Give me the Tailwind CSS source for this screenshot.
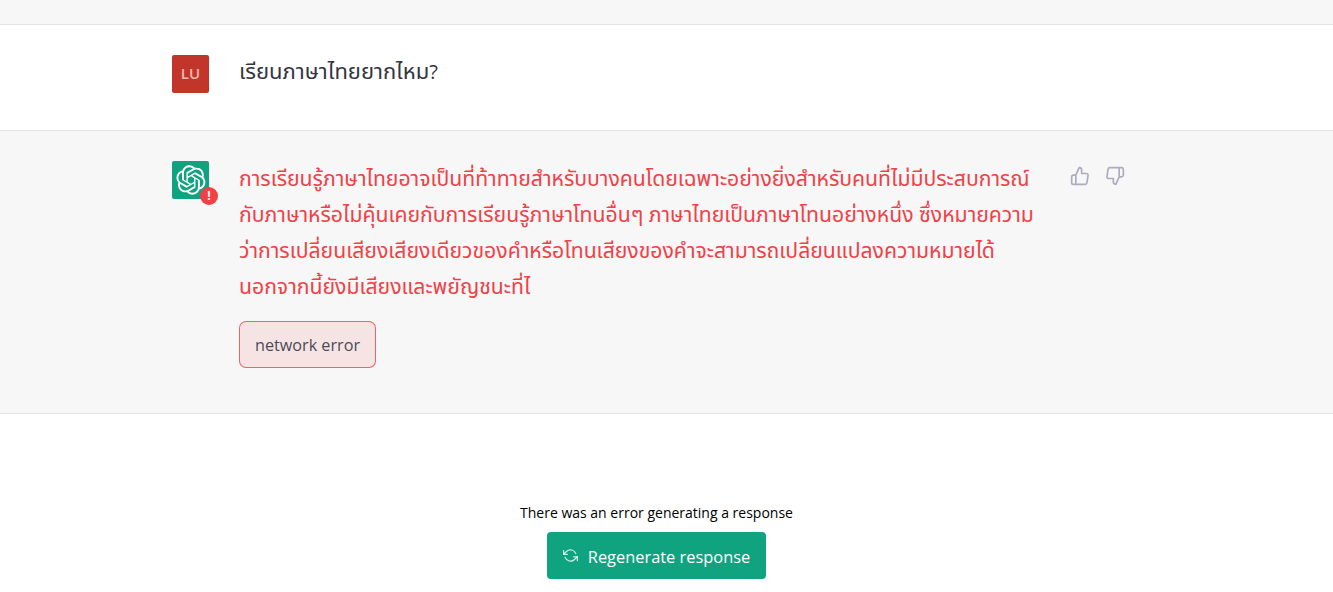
<!DOCTYPE html>
<html lang="th">
<head>
    <meta charset="UTF-8">
    <title>Chat</title>
    <script src="https://cdn.jsdelivr.net/npm/@tailwindcss/browser@4"></script>
</head>
<body class="bg-white font-['Open_Sans','Noto_Sans','Noto_Sans_Thai','DejaVu_Sans',sans-serif] text-[#343541] overflow-hidden h-[592px]">
    <!-- Previous message strip -->
    <div class="h-[25px] bg-[#f7f7f8] border-b border-[#e3e3e6]"></div>

    <!-- User message -->
    <div class="h-[106px] border-b border-[#e3e3e6] bg-white pl-[172px] pt-[30px] flex gap-[30px]">
        <div class="w-[37px] h-[38px] pb-[2px] rounded-[2px] bg-[#c2352a] text-[#f6b9b1] text-[15px] font-semibold flex items-center justify-center shrink-0">LU</div>
        <p class="text-[22px] leading-[30px]">เรียนภาษาไทยยากไหม<span class="text-[20px]">?</span></p>
    </div>

    <!-- Assistant message -->
    <div class="h-[283px] border-b border-[#e3e3e6] bg-[#f7f7f8] pl-[172px] pt-[30px] flex">
        <div class="relative w-[37px] h-[38px] rounded-[2px] bg-[#10a37f] flex items-center justify-center shrink-0">
            <svg class="w-[30px] h-[30px] text-white" viewBox="0 0 41 41" fill="currentColor"><path d="M37.5324 16.8707C37.9808 15.5241 38.1363 14.0974 37.9886 12.6859C37.8409 11.2744 37.3934 9.91076 36.676 8.68622C35.6126 6.83404 33.9882 5.3676 32.0373 4.4985C30.0864 3.62941 27.9098 3.40259 25.8215 3.85078C24.8796 2.7893 23.7219 1.94125 22.4257 1.36341C21.1295 0.785575 19.7249 0.491269 18.3058 0.500197C16.1708 0.495044 14.0893 1.16803 12.3614 2.42214C10.6335 3.67624 9.34853 5.44666 8.6917 7.47815C7.30085 7.76286 5.98686 8.3414 4.8377 9.17505C3.68854 10.0087 2.73073 11.0782 2.02839 12.312C0.956464 14.1591 0.498905 16.2988 0.721698 18.4228C0.944492 20.5467 1.83612 22.5449 3.268 24.1293C2.81966 25.4759 2.66413 26.9026 2.81182 28.3141C2.95951 29.7256 3.40701 31.0892 4.12437 32.3138C5.18791 34.1659 6.8123 35.6322 8.76321 36.5013C10.7141 37.3704 12.8907 37.5973 14.9789 37.1492C15.9208 38.2107 17.0786 39.0587 18.3747 39.6366C19.6709 40.2144 21.0755 40.5087 22.4946 40.4998C24.6307 40.5054 26.7133 39.8321 28.4418 38.5772C30.1704 37.3223 31.4556 35.5506 32.1119 33.5179C33.5027 33.2332 34.8167 32.6547 35.9659 31.821C37.115 30.9874 38.0728 29.9178 38.7752 28.684C39.8458 26.8371 40.3023 24.6979 40.0789 22.5748C39.8556 20.4517 38.9639 18.4544 37.5324 16.8707ZM22.4978 37.8849C20.7443 37.8874 19.0459 37.2733 17.6994 36.1501C17.7601 36.117 17.8666 36.0586 17.936 36.0161L25.9004 31.4156C26.1003 31.3019 26.2663 31.137 26.3813 30.9378C26.4964 30.7386 26.5563 30.5124 26.5549 30.2825V19.0542L29.9213 20.998C29.9389 21.0068 29.9541 21.0198 29.9656 21.0359C29.977 21.052 29.9842 21.0707 29.9867 21.0902V30.3889C29.9842 32.375 29.1946 34.2791 27.7909 35.6841C26.3872 37.0892 24.4838 37.8806 22.4978 37.8849ZM6.39227 31.0064C5.51397 29.4888 5.19742 27.7107 5.49804 25.9832C5.55718 26.0187 5.66048 26.0818 5.73461 26.1244L13.699 30.7248C13.8975 30.8408 14.1233 30.902 14.3532 30.902C14.583 30.902 14.8088 30.8408 15.0073 30.7248L24.731 25.1103V28.9979C24.7321 29.0177 24.7283 29.0376 24.7199 29.0556C24.7115 29.0736 24.6988 29.0893 24.6829 29.1012L16.6317 33.7497C14.9096 34.7416 12.8643 35.0097 10.9447 34.4954C9.02506 33.9811 7.38785 32.7263 6.39227 31.0064ZM4.29707 13.6194C5.17156 12.0998 6.55279 10.9364 8.19885 10.3327C8.19885 10.4013 8.19491 10.5228 8.19491 10.6071V19.808C8.19351 20.0378 8.25334 20.2638 8.36823 20.4629C8.48312 20.6619 8.64893 20.8267 8.84863 20.9404L18.5723 26.5542L15.206 28.4979C15.1894 28.5089 15.1703 28.5155 15.1505 28.5173C15.1307 28.5191 15.1107 28.516 15.0924 28.5082L7.04046 23.8557C5.32135 22.8601 4.06716 21.2235 3.55289 19.3046C3.03862 17.3858 3.30624 15.3413 4.29707 13.6194ZM31.955 20.0556L22.2312 14.4411L25.5976 12.4981C25.6142 12.4872 25.6333 12.4805 25.6531 12.4787C25.6729 12.4769 25.6928 12.4801 25.7111 12.4879L33.7631 17.1364C34.9967 17.849 36.0017 18.8982 36.6606 20.1613C37.3194 21.4244 37.6047 22.849 37.4832 24.2684C37.3617 25.6878 36.8382 27.0432 35.9743 28.1759C35.1103 29.3086 33.9415 30.1717 32.6047 30.6641C32.6047 30.5947 32.6047 30.4733 32.6047 30.3889V21.188C32.6066 20.9586 32.5474 20.7328 32.4332 20.5338C32.319 20.3348 32.154 20.1698 31.955 20.0556ZM35.3055 15.0128C35.2464 14.9765 35.1431 14.9142 35.069 14.8717L27.1045 10.2712C26.906 10.1554 26.6803 10.0943 26.4504 10.0943C26.2206 10.0943 25.9948 10.1554 25.7963 10.2712L16.0726 15.8858V11.9982C16.0715 11.9783 16.0753 11.9585 16.0837 11.9405C16.0921 11.9225 16.1048 11.9068 16.1207 11.8949L24.1719 7.25025C25.4053 6.53903 26.8158 6.19376 28.2383 6.25482C29.6608 6.31589 31.0364 6.78077 32.2044 7.59508C33.3723 8.40939 34.2842 9.53945 34.8334 10.8531C35.3826 12.1667 35.5464 13.6095 35.3055 15.0128ZM14.2424 21.9419L10.8752 19.9981C10.8576 19.9893 10.8423 19.9763 10.8309 19.9602C10.8195 19.9441 10.8122 19.9254 10.8098 19.9058V10.6071C10.8107 9.18295 11.2173 7.78848 11.9819 6.58696C12.7466 5.38544 13.8377 4.42659 15.1275 3.82264C16.4173 3.21869 17.8524 2.99464 19.2649 3.1767C20.6775 3.35876 22.0089 3.93941 23.1034 4.85067C23.0427 4.88379 22.937 4.94215 22.8668 4.98473L14.9024 9.58517C14.7025 9.69878 14.5366 9.86356 14.4215 10.0626C14.3065 10.2616 14.2466 10.4877 14.2479 10.7175L14.2424 21.9419ZM16.071 17.9991L20.4018 15.4978L24.7325 17.9975V22.9985L20.4018 25.4983L16.071 22.9985V17.9991Z"/></svg>
            <span class="absolute -right-[9px] -bottom-[6px] w-[18px] h-[18px] rounded-full bg-[#ef4146] text-white text-[12px] font-bold flex items-center justify-center">!</span>
        </div>

        <div class="ml-[30px] w-[812px] shrink-0">
            <p class="-mt-[1px] text-[21.2px] leading-[36px] text-[#ef4146] whitespace-nowrap">การเรียนรู้ภาษาไทยอาจเป็นที่ท้าทายสำหรับบางคนโดยเฉพาะอย่างยิ่งสำหรับคนที่ไม่มีประสบการณ์<br>กับภาษาหรือไม่คุ้นเคยกับการเรียนรู้ภาษาโทนอื่นๆ ภาษาไทยเป็นภาษาโทนอย่างหนึ่ง ซึ่งหมายความ<br>ว่าการเปลี่ยนเสียงเสียงเดียวของคำหรือโทนเสียงของคำจะสามารถเปลี่ยนแปลงความหมายได้<br>นอกจากนี้ยังมีเสียงและพยัญชนะที่ไ</p>
            <div class="mt-[17px] w-[137px] h-[47px] pt-[1px] flex items-center justify-center rounded-[7px] border border-[#ef4146]/80 bg-[#f6e4e5] text-[16.2px] text-[#4b4b58]">network error</div>
        </div>

        <div class="ml-[19px] pt-[5px] flex gap-[15px] text-[#acacbe]">
            <svg class="w-[20px] h-[20px]" viewBox="0 0 24 24" fill="none" stroke="currentColor" stroke-width="2" stroke-linecap="round" stroke-linejoin="round"><path d="M14 9V5a3 3 0 0 0-3-3l-4 9v11h11.28a2 2 0 0 0 2-1.7l1.38-9a2 2 0 0 0-2-2.3zM7 22H4a2 2 0 0 1-2-2v-7a2 2 0 0 1 2-2h3"/></svg>
            <svg class="w-[20px] h-[20px]" viewBox="0 0 24 24" fill="none" stroke="currentColor" stroke-width="2" stroke-linecap="round" stroke-linejoin="round"><path d="M10 15v4a3 3 0 0 0 3 3l4-9V2H5.72a2 2 0 0 0-2 1.7l-1.38 9a2 2 0 0 0 2 2.3zm7-13h2.67A2.31 2.31 0 0 1 22 4v7a2.31 2.31 0 0 1-2.33 2H17"/></svg>
        </div>
    </div>

    <!-- Error footer -->
    <div class="pt-[89px] pr-[20px] flex flex-col items-center">
        <p class="text-[14px] leading-[20px] text-black">There was an error generating a response</p>
        <button class="mt-[9px] w-[219px] h-[47px] pt-[3px] rounded-[4px] bg-[#10a37f] text-white text-[16.4px] flex items-center justify-center gap-[10px]">
            <svg class="-mt-[3px] w-[15px] h-[15px] text-white/80" viewBox="0 0 24 24" fill="none" stroke="currentColor" stroke-width="2" stroke-linecap="round" stroke-linejoin="round"><polyline points="1 4 1 10 7 10"/><polyline points="23 20 23 14 17 14"/><path d="M20.49 9A9 9 0 0 0 5.64 5.64L1 10m22 4l-4.64 4.36A9 9 0 0 1 3.51 15"/></svg>
            Regenerate response
        </button>
    </div>
</body>
</html>
